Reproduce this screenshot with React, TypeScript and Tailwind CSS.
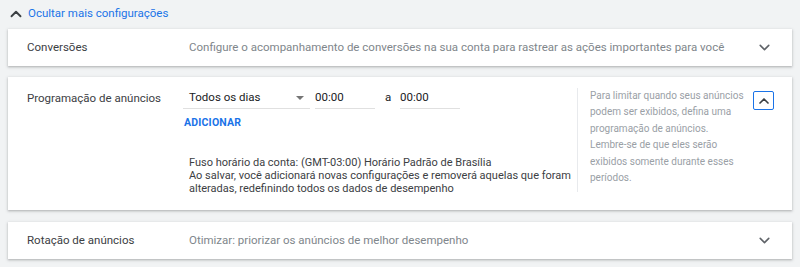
import { ChevronDown, ChevronUp } from "lucide-react";

const font = { fontFamily: "Roboto, 'Liberation Sans', sans-serif" };

function CollapsedCard({ title, summary }: { title: string; summary: string }) {
    return (
        <div className="flex h-[37px] items-center bg-white pl-[19px] pr-[19px] shadow-[0_1px_2px_rgba(60,64,67,0.3),0_1px_3px_1px_rgba(60,64,67,0.08)]">
            <div className="w-[162px] shrink-0 text-[11.5px] text-[#3c4043]">{title}</div>
            <div className="flex-1 truncate text-[11.5px] text-[#80868b]">{summary}</div>
            <ChevronDown className="h-[17px] w-[17px] shrink-0 text-[#5f6368]" strokeWidth={2.2} />
        </div>
    );
}

function TimeInput({ value }: { value: string }) {
    return (
        <div className="h-[21px] w-[60px] border-b border-[#e0e0e0] text-[11.5px] leading-[19px] text-[#202124]">{value}</div>
    );
}

export default function App() {
    return (
        <div className="min-h-screen bg-[#f1f3f4] px-[8px] pb-[8px]" style={font}>
            {/* Toggle */}
            <button className="flex h-[29px] items-center gap-[3px] pb-[1px] text-[11.5px] text-[#1a73e8]">
                <ChevronUp className="-ml-[1px] h-[18px] w-[18px] text-[#3c4043]" strokeWidth={2.5} />
                <span>Ocultar mais configurações</span>
            </button>

            <div className="flex flex-col gap-[11px]">
                <CollapsedCard
                    title="Conversões"
                    summary="Configure o acompanhamento de conversões na sua conta para rastrear as ações importantes para você"
                />

                {/* Expanded: ad schedule */}
                <div className="flex h-[133px] bg-white pl-[19px] pr-[18px] pt-[11px] shadow-[0_1px_2px_rgba(60,64,67,0.3),0_1px_3px_1px_rgba(60,64,67,0.08)]">
                    <div className="w-[162px] shrink-0 pt-[1px] text-[11.5px] leading-[18px] text-[#3c4043]">
                        Programação de anúncios
                    </div>

                    <div className="mb-[18px] w-[389px] shrink-0 border-r border-[#e8eaed]">
                        <div className="-ml-[6px] flex items-start">
                            <div className="flex h-[21px] w-[127px] items-start justify-between border-b border-[#e0e0e0] pl-[6px] pr-[6px] text-[11.5px] leading-[19px] text-[#202124]">
                                <span>Todos os dias</span>
                                <span className="mt-[8px] h-0 w-0 border-x-[4px] border-t-[4px] border-x-transparent border-t-[#757575]" />
                            </div>
                            <div className="ml-[5px]">
                                <TimeInput value="00:00" />
                            </div>
                            <span className="ml-[10px] w-[15px] text-[11.5px] leading-[19px] text-[#202124]">a</span>
                            <TimeInput value="00:00" />
                        </div>
                        <button className="-ml-[5px] mt-[7px] text-[10.5px] font-bold leading-[14px] tracking-[0.2px] text-[#1a73e8]">
                            ADICIONAR
                        </button>
                        <p className="mt-[23px] w-[388px] text-[11px] leading-[13px] text-[#3c4043]">
                            Fuso horário da conta: (GMT-03:00) Horário Padrão de Brasília
                            <br />
                            Ao salvar, você adicionará novas configurações e removerá aquelas que foram alteradas, redefinindo todos os dados de desempenho
                        </p>
                    </div>

                    <p className="w-[166px] shrink-0 pl-[12px] text-[10px] leading-[16.4px] text-[#9aa0a6]">
                        Para limitar quando seus anúncios podem ser exibidos, defina uma programação de anúncios. Lembre-se de que eles serão exibidos somente durante esses períodos.
                    </p>

                    <button className="ml-auto mt-[3px] flex h-[19px] w-[21px] items-center justify-center rounded-[2px] border-[1.5px] border-[#1a73e8]">
                        <ChevronUp className="h-[16px] w-[16px] text-[#3c4043]" strokeWidth={2.5} />
                    </button>
                </div>

                <div className="mt-[1px]">
                    <CollapsedCard
                        title="Rotação de anúncios"
                        summary="Otimizar: priorizar os anúncios de melhor desempenho"
                    />
                </div>
            </div>
        </div>
    );
}
